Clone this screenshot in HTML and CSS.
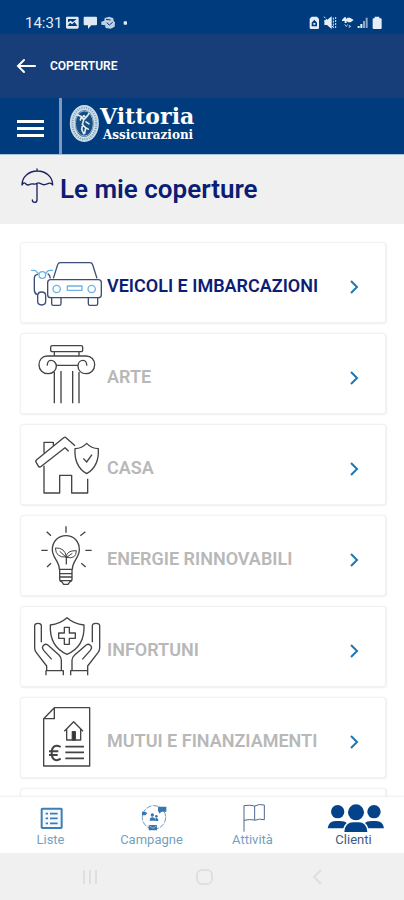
FILE: index.html
```html
<!DOCTYPE html>
<html lang="it">
<head>
<meta charset="utf-8">
<meta name="viewport" content="width=device-width, initial-scale=1">
<title>Le mie coperture</title>
<link rel="stylesheet" href="styles.css">
</head>
<body>
<div class="app">
  <div class="status">
    <span class="time">14:31</span>
    <svg class="status-left" viewBox="195 42 192 54" aria-hidden="true">
      <g fill="#dfe8f5">
        <path fill-rule="evenodd" d="M202 50h30q4 0 4 4v28q0 4-4 4h-30q-4 0-4-4V54q0-4 4-4zm2 7v10l8-5 6 5 12-10zm-1 21h29l-8-12-8 7-6-5z"/>
        <path d="M254 50h34q3 0 3 3v20q0 3-3 3h-14l-10 11V76h-10q-3 0-3-3V53q0-3 3-3z"/>
        <path d="M314 54l14-4 12 5 1 8 4 4-1 13-12 6-15-2-2-8-11-2v-9l9-3z" opacity=".85"/>
        <rect x="371" y="64" width="10" height="10" rx="2"/>
      </g>
      <path d="M318 58l14 2M320 68l8 7 10-8" fill="none" stroke="#003c7d" stroke-width="3"/>
    </svg>
    <svg class="status-right" viewBox="318 42 228 54" aria-hidden="true">
      <g fill="#e6edf7">
        <path fill-rule="evenodd" d="M329 50h16l6 7v26q0 4-4 4h-20q-4 0-4-4V56zm8 9l-8 9v11h16V68zm-3 10h6v5h-6z"/>
        <path d="M367 60h8l14-11v38l-14-12h-8z"/>
        <path d="M366 50l29 34M394 53v31M401 51v35" stroke="#e6edf7" stroke-width="3" stroke-dasharray="6 3"/>
        <path d="M420 60l7-8h5v6l4-5h8l11 7-9 7h-8l-4-5v7h-6v-6h-8z"/>
        <path d="M428 73l5 7 4-7M442 84v-9l5 6" fill="none" stroke="#9db6d6" stroke-width="3"/>
        <path d="M467 84v-6h6v6zM475 84V72h6v12z"/>
        <path d="M483 84V63h6v21zM491 84V53h6v31z" opacity=".6"/>
        <path d="M518 50h14v5h4q3 0 3 3v26q0 3-3 3h-21q-3 0-3-3V58q0-3 3-3h3z"/>
      </g>
    </svg>
  </div>

  <header class="topbar">
    <button class="back" type="button" aria-label="Indietro">
      <svg viewBox="0 0 20 16" aria-hidden="true"><path d="M19 8H2M8 2L2 8l6 6" fill="none" stroke="#fff" stroke-width="2" stroke-linecap="round"/></svg>
    </button>
    <span class="topbar-title">COPERTURE</span>
  </header>

  <div class="brand">
    <button class="menu" type="button" aria-label="Menu"><i></i><i></i><i></i></button>
    <svg class="seal" viewBox="207 312 93 118" aria-hidden="true">
      <ellipse cx="253" cy="371" rx="36" ry="48" fill="none" stroke="#c9dce8" stroke-width="16"/>
      <ellipse cx="253" cy="371" rx="36" ry="48" fill="none" stroke="#7d9dbb" stroke-width="6" stroke-dasharray="3 4"/>
      <ellipse cx="253" cy="371" rx="27" ry="38" fill="#174e84" stroke="#dce9ee" stroke-width="2"/>
      <path d="M233 345l12 5 6 10 11-12 5-7M251 360l-4 14 10 10 8 4M248 374l-3 15 6 13M257 384l-3 17M244 351l-3 9M258 366l9 6" fill="none" stroke="#e2edf0" stroke-width="5" stroke-linecap="round"/>
      <circle cx="252" cy="349" r="4" fill="#e2edf0"/>
    </svg>
    <div class="wordmark"><span class="word-main">Vittoria</span><span class="word-sub">Assicurazioni</span></div>
  </div>

  <div class="heading">
    <svg class="umbrella" viewBox="60 39 105 111" aria-hidden="true">
      <path d="M66 90c0-24 20-42 46-42s46 18 46 42q-5-8-12-5t-12 4-12-3-11-1-11 2-12 2-11-3-11 4zM111 42v6M111 86v48q0 8-7 8t-7-7" fill="none" stroke="#1d2362" stroke-width="4" stroke-linecap="round" stroke-linejoin="round"/>
    </svg>
    <h1>Le mie coperture</h1>
  </div>

  <main class="list">
    <a class="card active" href="#veicoli">
      <svg class="pic" viewBox="18 9 258 240" aria-hidden="true">
        <g class="ln navy">
          <path d="M115 115l13-41q2-6 8-6h89q6 0 8 6l13 41"/>
          <path d="M107 119h143q9 0 9 9v36q0 9-9 9H107q-9 0-9-9v-36q0-9 9-9z"/>
          <path d="M110 174v17q0 5 5 5h18q5 0 5-5v-17M220 174v17q0 5 5 5h18q5 0 5-5v-17"/>
          <path d="M69 103q-11 1-11 12v34q0 11 8 15M98 101q7 4 8 14M68 184v-17q0-11 12-11t12 11v17q0 11-12 11t-12-11z"/>
        </g>
        <g class="ln sky">
          <circle cx="82" cy="105" r="10"/><circle cx="125" cy="147" r="11"/><circle cx="230" cy="147" r="11"/>
          <path d="M48 91h10q6 0 9 7l5 4M92 101l5-7q3-3 8-3h9M157 138h44v13h-44z"/>
        </g>
      </svg>
      <span class="label">VEICOLI E IMBARCAZIONI</span>
      <svg class="chev" viewBox="0 0 10 14" aria-hidden="true"><path d="M2 1l6 6-6 6"/></svg>
    </a>
    <a class="card" href="#arte">
      <svg class="pic" viewBox="18 12 258 240" aria-hidden="true">
        <g class="ln">
          <path d="M112 47h86q5 0 5 5v7q0 6-5 6h-86q-5 0-5-6v-7q0-5 5-5zM118 66v11M192 66v11"/>
          <path d="M120 78H97c-16 0-25 12-25 26 0 16 12 27 27 27 14 0 25-9 25-22 0-11-8-18-16-18-8 0-12 8-11 16M120 78h93c16 0 26 12 26 26 0 16-12 27-26 27-14 0-24-9-24-22 0-11 7-18 15-18 8 0 12 8 11 16M124 106h65"/>
          <path d="M118 126v94M138 123v97M173 123v97M192 126v94"/>
        </g>
      </svg>
      <span class="label">ARTE</span>
      <svg class="chev" viewBox="0 0 10 14" aria-hidden="true"><path d="M2 1l6 6-6 6"/></svg>
    </a>
    <a class="card" href="#casa">
      <svg class="pic" viewBox="18 15 258 240" aria-hidden="true">
        <g class="ln">
          <path d="M180 77l-27-24q-3-3-7 0L65 119q-5 4-1 9l5 9q4 7 10 2l71-56 11 11M87 98V67h28v11M87 137v82h47v-53h36v53h48v-43"/>
          <path d="M215 70q14 15 35 16 3 53-35 75-38-22-35-75 21-1 35-16zM205 115l10 11 16-22"/>
        </g>
      </svg>
      <span class="label">CASA</span>
      <svg class="chev" viewBox="0 0 10 14" aria-hidden="true"><path d="M2 1l6 6-6 6"/></svg>
    </a>
    <a class="card" href="#energie">
      <svg class="pic" viewBox="18 18 258 240" aria-hidden="true">
        <g class="ln">
          <path d="M133 178c0-26-21-34-21-59 0-25 18-42 41-42s40 17 40 42c0 25-21 33-21 59z"/>
          <path d="M134 180v27q0 7 6 8l6 8h13l6-8q6-1 6-8v-27M134 191h37M134 201h37M137 212h31"/>
          <path d="M154 163v-22q-31 3-33-27 29-2 33 27zM154 142q0-21 30-20 0 27-30 20M134 124l20 18M172 130l-17 12" stroke-width="3"/>
          <path d="M153 49v19M95 65l13 12M211 65l-15 12M79 121h19M211 121h19M96 171l12-11M212 171l-13-11"/>
        </g>
      </svg>
      <span class="label">ENERGIE RINNOVABILI</span>
      <svg class="chev" viewBox="0 0 10 14" aria-hidden="true"><path d="M2 1l6 6-6 6"/></svg>
    </a>
    <a class="card" href="#infortuni">
      <svg class="pic" viewBox="18 21 258 240" aria-hidden="true">
        <g class="ln">
          <path d="M156 53q20 18 51 22 3 65-51 88-53-23-50-88 30-4 50-22z"/>
          <path d="M148 82h15v17h18v16h-18v18h-15v-18h-17V99h17z"/>
          <path d="M79 127V77q0-7-10-7t-10 7v67q0 8 5 14l31 40v14M110 178l-24-27q-7-9 0-15 7-7 15 1l31 28q7 7 7 16v31M93 226v-14h52v14"/>
          <path d="M232 127V77q0-7 11-7t11 7v67q0 8-5 14l-31 40v14M202 178l24-27q7-9 0-15-7-7-15 1l-32 28q-8 7-8 16v31M218 226v-14h-51v14"/>
        </g>
      </svg>
      <span class="label">INFORTUNI</span>
      <svg class="chev" viewBox="0 0 10 14" aria-hidden="true"><path d="M2 1l6 6-6 6"/></svg>
    </a>
    <a class="card" href="#mutui">
      <svg class="pic" viewBox="18 24 258 240" aria-hidden="true">
        <g class="ln">
          <path d="M118 53h106v175H86V86zM118 53v33H86"/>
          <path d="M148 124l28-29 28 29M155 118v32h42v-32"/>
          <path d="M172 150v-25h9v25z" fill="#333"/>
          <path d="M151 170h56M151 187h56M151 205h56" stroke-width="5"/>
          <path d="M137 171c-15-9-27-2-27 18s13 27 27 17M102 184h28M102 195h26" stroke-width="6"/>
        </g>
      </svg>
      <span class="label">MUTUI E FINANZIAMENTI</span>
      <svg class="chev" viewBox="0 0 10 14" aria-hidden="true"><path d="M2 1l6 6-6 6"/></svg>
    </a>
    <div class="card"></div>
  </main>

  <nav class="tabs">
    <a href="#liste">
      <svg viewBox="62 51 180 102" aria-hidden="true">
        <rect x="124" y="86" width="60" height="58" rx="2" fill="#f4f9fd" stroke="#3f7eb4" stroke-width="6"/>
        <path d="M136 101h7M149 101h23M136 115h7M149 115h23M136 130h7M149 130h23" stroke="#3f7eb4" stroke-width="5"/>
      </svg>
      <span>Liste</span>
    </a>
    <a href="#campagne">
      <svg viewBox="364 51 180 102" aria-hidden="true">
        <circle cx="460" cy="112" r="35" fill="none" stroke="#6d9cc2" stroke-width="3" stroke-dasharray="16 4"/>
        <g fill="#3976ae"><path d="M472 80h25v15h-14l-8 6v-6h-3zM424 95h10l6 5-6 6h-10zM444 135h25v16h-25z"/>
        <circle cx="455" cy="105" r="5"/><path d="M447 122q0-10 8-10t10 10z"/><circle cx="467" cy="109" r="4"/><path d="M464 123v-8q9-3 9 8z"/></g>
        <path d="M446 137l11 8 11-8" fill="none" stroke="#b9d2e6" stroke-width="2"/>
      </svg>
      <span>Campagne</span>
    </a>
    <a href="#attivita">
      <svg viewBox="62 51 180 102" aria-hidden="true">
        <path d="M125 155V77q16-3 32 1v42q-16-3-32 1M157 78q13-7 29-3v44q-15-4-29 2" fill="none" stroke="#53678f" stroke-width="3"/>
      </svg>
      <span>Attività</span>
    </a>
    <a class="current" href="#clienti">
      <svg viewBox="364 51 180 102" aria-hidden="true">
        <g fill="#044389"><circle cx="405" cy="95" r="20"/><circle cx="514" cy="95" r="20"/><circle cx="460" cy="97" r="24"/>
        <path d="M375 145q3-22 24-22h12q17 0 21 6-9 7-10 16zM544 145q-3-22-24-22h-12q-17 0-21 6 9 7 10 16zM425 156q2-29 27-29h16q24 0 26 29z"/></g>
      </svg>
      <span>Clienti</span>
    </a>
  </nav>

  <div class="system">
    <button type="button" aria-label="Recenti"><svg viewBox="0 0 20 20"><path d="M4 3v14M10 3v14M16 3v14"/></svg></button>
    <button type="button" aria-label="Home"><svg viewBox="0 0 20 20"><rect x="3" y="3" width="15" height="14" rx="5"/></svg></button>
    <button type="button" aria-label="Indietro"><svg viewBox="0 0 20 20"><path d="M13 3l-7 7 7 7"/></svg></button>
  </div>
</div>
</body>
</html>
```
FILE: styles.css
```css
* { box-sizing: border-box; }

body {
  margin: 0;
  font-family: Roboto, "Liberation Sans", sans-serif;
  background: #fff;
}

a { text-decoration: none; color: inherit; }

button {
  padding: 0;
  border: 0;
  background: none;
}

svg { display: block; flex: none; }

.app {
  display: flex;
  flex-direction: column;
  height: 100vh;
  overflow: hidden;
}

.status {
  flex: none;
  display: flex;
  align-items: center;
  height: 34px;
  padding: 12px 20px 0 25px;
  background: #003c7d;
  color: #e3ebf6;
}

.time {
  width: 40px;
  font-size: 15px;
  line-height: 20px;
}

.status-left { width: 64px; height: 18px; }
.status-right { width: 76px; height: 18px; margin-left: auto; }

.topbar {
  flex: none;
  display: flex;
  align-items: center;
  gap: 14px;
  height: 64px;
  padding: 0 16px;
  background: #173e78;
  color: #fff;
}

.back svg { width: 20px; height: 16px; }

.topbar-title {
  font-size: 12px;
  font-weight: 600;
}

.brand {
  flex: none;
  display: flex;
  height: 57px;
  border-bottom: 1px solid #a9c0dc;
  background: #003c7d;
  color: #fff;
}

.menu {
  display: flex;
  flex-direction: column;
  justify-content: center;
  gap: 4px;
  width: 62px;
  padding: 5px 0 0 17px;
  border-right: 3px solid #8199b8;
}

.menu i {
  width: 27px;
  height: 3px;
  background: #fff;
}

.seal {
  width: 31px;
  height: 39px;
  margin: 6px 0 0 7px;
}

.wordmark {
  display: flex;
  flex-direction: column;
  padding-top: 6px;
  font-family: "DejaVu Serif", serif;
  font-weight: 700;
}

.word-main { font-size: 22px; line-height: 24px; }
.word-sub { padding-left: 3px; font-size: 12px; line-height: 14px; }

.heading {
  flex: none;
  display: flex;
  gap: 5px;
  height: 69px;
  padding: 13px 20px 0;
  background: #f0f0f0;
  color: #0b1d75;
}

.umbrella { width: 35px; height: 37px; }

h1 {
  margin: 0;
  padding-top: 6px;
  font-size: 26px;
  line-height: 30px;
  font-weight: 600;
}

.list {
  flex: 1 1 0;
  min-height: 0;
  display: flex;
  flex-direction: column;
  gap: 9px;
  padding: 18px 17px 0 20px;
  overflow: hidden;
}

.card {
  flex: none;
  display: flex;
  align-items: center;
  height: 82px;
  padding-right: 26px;
  border: 2px solid #f2f2f2;
  border-width: 1px 2px 2px 1px;
  border-radius: 4px;
  color: #b8b8b8;
  box-shadow: 0 0 2px #f0f0f0;
}

.card.active { color: #0b1d75; }

.pic { width: 86px; height: 80px; }

.label {
  flex: 1;
  padding-top: 7px;
  font-size: 18px;
  line-height: 20px;
  font-weight: 600;
}

.ln {
  fill: none;
  stroke: #444;
  stroke-width: 4;
  stroke-linejoin: round;
}

.navy { stroke: #3c4e76; }
.sky { stroke: #6cb2e2; }

.chev {
  width: 10px;
  height: 14px;
  margin-top: 8px;
  fill: none;
  stroke: #1c78b4;
  stroke-width: 2;
}

.tabs {
  flex: none;
  display: grid;
  grid-template-columns: repeat(4, 1fr);
  height: 56px;
  background: #fff;
  color: #759fbe;
  font-size: 13px;
  line-height: 18px;
  box-shadow: 0 -1px 2px #eee;
}

.tabs a {
  display: flex;
  flex-direction: column;
  align-items: center;
}

.tabs svg { width: 60px; height: 34px; overflow: visible; }
.tabs .current { color: #44597f; }

.system {
  flex: none;
  display: flex;
  justify-content: center;
  gap: 94px;
  height: 47px;
  padding-left: 3px;
  background: #f0f0f0;
}

.system svg {
  width: 20px;
  height: 20px;
  fill: none;
  stroke: #dfdfdf;
  stroke-width: 2;
}
```
